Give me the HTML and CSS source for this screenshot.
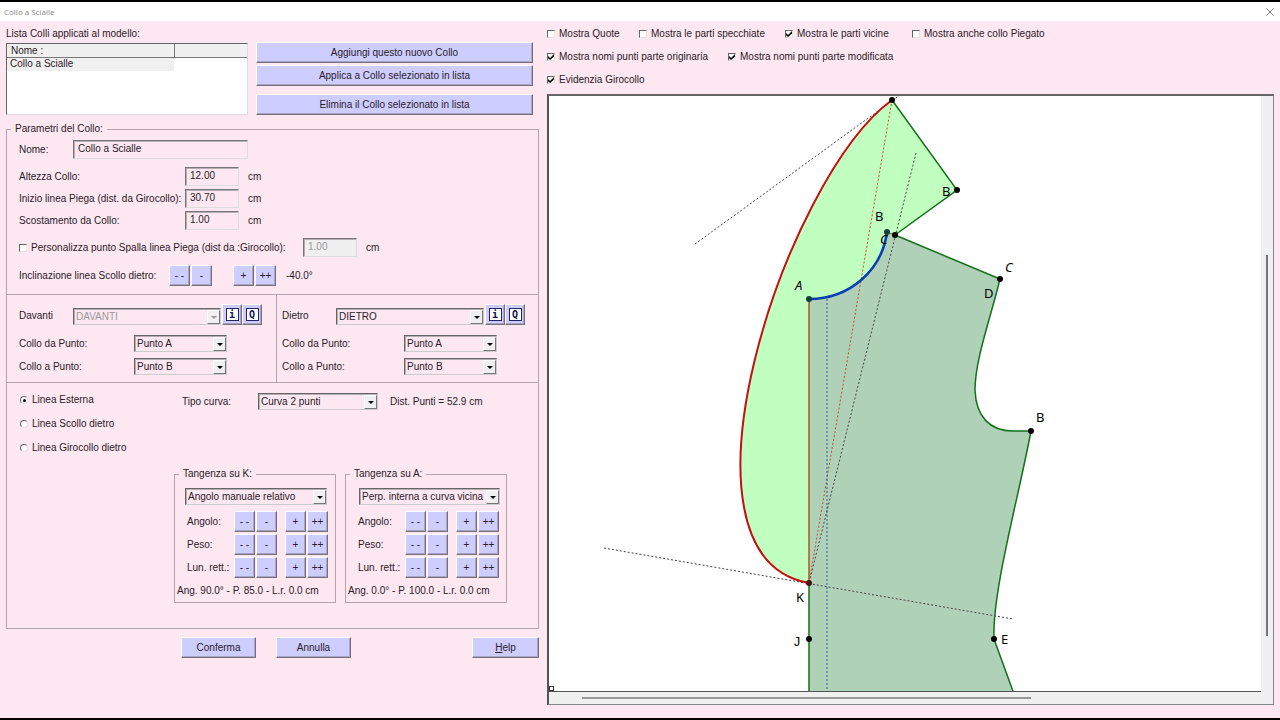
FILE: index.html
```html
<!DOCTYPE html>
<html lang="it">
<head>
    <meta charset="UTF-8">
    <meta name="viewport" content="width=device-width, initial-scale=1.0">
    <title>Collo a Scialle</title>
    <link rel="stylesheet" href="styles.css">
</head>
<body>

<header class="titlebar">
    <span>Collo a Scialle</span>
    <button class="close" aria-label="Chiudi">
        <svg width="8" height="8" viewBox="0 0 8 8"><path d="M0.5 0.5L7.5 7.5M7.5 0.5L0.5 7.5" stroke="#777" fill="none"/></svg>
    </button>
</header>

<main>
    <div class="left">
        <div class="top">
            <div class="lista">
                <div class="caption">Lista Colli applicati al modello:</div>
                <div class="listbox">
                    <table>
                        <thead><tr><th>Nome :</th><th></th></tr></thead>
                        <tbody><tr><td class="selected">Collo a Scialle</td><td></td></tr></tbody>
                    </table>
                </div>
            </div>
            <div class="actions">
                <button>Aggiungi questo nuovo Collo</button>
                <button>Applica a Collo selezionato in lista</button>
                <button class="delete">Elimina il Collo selezionato in lista</button>
            </div>
        </div>

        <fieldset class="parametri">
            <legend>Parametri del Collo:</legend>

            <div class="dati">
                <div class="row">
                    <label class="w-name" for="nome">Nome:</label>
                    <input type="text" class="long" id="nome" value="Collo a Scialle">
                </div>
                <div class="row space">
                    <label class="w-size" for="altezza">Altezza Collo:</label>
                    <input type="text" id="altezza" value="12.00"><span class="unit">cm</span>
                </div>
                <div class="row">
                    <label class="w-size" for="inizio">Inizio linea Piega (dist. da Girocollo):</label>
                    <input type="text" id="inizio" value="30.70"><span class="unit">cm</span>
                </div>
                <div class="row">
                    <label class="w-size" for="scostamento">Scostamento da Collo:</label>
                    <input type="text" id="scostamento" value="1.00"><span class="unit">cm</span>
                </div>
                <div class="row space">
                    <label class="check w-spalla"><input type="checkbox">Personalizza punto Spalla linea Piega (dist da :Girocollo):</label>
                    <input type="text" value="1.00" aria-label="Distanza da Girocollo" disabled><span class="unit">cm</span>
                </div>
                <div class="row steps space">
                    <span class="w-incl">Inclinazione linea Scollo dietro:</span>
                    <button class="step">- -</button><button class="step">-</button>
                    <button class="step plus wide">+</button><button class="step">++</button>
                    <span class="unit">-40.0°</span>
                </div>
            </div>

            <div class="parti">
                <div class="parte">
                    <div class="row pezzo">
                        <label for="davanti">Davanti</label>
                        <span class="combo off"><select id="davanti" disabled><option>DAVANTI</option></select></span>
                        <button class="icon"><b>i</b></button><button class="icon"><b>Q</b></button>
                    </div>
                    <div class="row punto">
                        <label for="da1">Collo da Punto:</label>
                        <span class="combo"><select id="da1"><option>Punto A</option></select></span>
                    </div>
                    <div class="row punto">
                        <label for="a1">Collo a Punto:</label>
                        <span class="combo"><select id="a1"><option>Punto B</option></select></span>
                    </div>
                </div>
                <div class="parte dietro">
                    <div class="row pezzo">
                        <label for="dietro">Dietro</label>
                        <span class="combo"><select id="dietro"><option>DIETRO</option></select></span>
                        <button class="icon"><b>i</b></button><button class="icon"><b>Q</b></button>
                    </div>
                    <div class="row punto">
                        <label for="da2">Collo da Punto:</label>
                        <span class="combo"><select id="da2"><option>Punto A</option></select></span>
                    </div>
                    <div class="row punto">
                        <label for="a2">Collo a Punto:</label>
                        <span class="combo"><select id="a2"><option>Punto B</option></select></span>
                    </div>
                </div>
            </div>

            <div class="linee">
                <div class="radios">
                    <label class="check"><input type="radio" name="linea" checked>Linea Esterna</label>
                    <label class="check"><input type="radio" name="linea">Linea Scollo dietro</label>
                    <label class="check"><input type="radio" name="linea">Linea Girocollo dietro</label>
                </div>
                <div class="curva">
                    <div class="row tipo">
                        <label for="tipo">Tipo curva:</label>
                        <span class="combo"><select id="tipo"><option>Curva 2 punti</option></select></span>
                        <span>Dist. Punti = 52.9 cm</span>
                    </div>
                    <div class="tangenze">
                        <fieldset>
                            <legend>Tangenza su K:</legend>
                            <span class="combo"><select aria-label="Tangenza su K"><option>Angolo manuale relativo</option></select></span>
                            <div class="row steps"><span>Angolo:</span><button class="step">- -</button><button class="step">-</button><button class="step plus">+</button><button class="step">++</button></div>
                            <div class="row steps"><span>Peso:</span><button class="step">- -</button><button class="step">-</button><button class="step plus">+</button><button class="step">++</button></div>
                            <div class="row steps"><span>Lun. rett.:</span><button class="step">- -</button><button class="step">-</button><button class="step plus">+</button><button class="step">++</button></div>
                            <p>Ang. 90.0° - P. 85.0 - L.r. 0.0 cm</p>
                        </fieldset>
                        <fieldset class="su-a">
                            <legend>Tangenza su A:</legend>
                            <span class="combo"><select aria-label="Tangenza su A"><option>Perp. interna a curva vicina</option></select></span>
                            <div class="row steps"><span>Angolo:</span><button class="step">- -</button><button class="step">-</button><button class="step plus">+</button><button class="step">++</button></div>
                            <div class="row steps"><span>Peso:</span><button class="step">- -</button><button class="step">-</button><button class="step plus">+</button><button class="step">++</button></div>
                            <div class="row steps"><span>Lun. rett.:</span><button class="step">- -</button><button class="step">-</button><button class="step plus">+</button><button class="step">++</button></div>
                            <p>Ang. 0.0° - P. 100.0 - L.r. 0.0 cm</p>
                        </fieldset>
                    </div>
                </div>
            </div>
        </fieldset>

        <div class="bottom">
            <button>Conferma</button>
            <button>Annulla</button>
            <button class="help"><u>H</u>elp</button>
        </div>
    </div>

    <div class="right">
        <div class="options">
            <div class="optrow four">
                <label class="check"><input type="checkbox">Mostra Quote</label>
                <label class="check"><input type="checkbox">Mostra le parti specchiate</label>
                <label class="check"><input type="checkbox" checked>Mostra le parti vicine</label>
                <label class="check"><input type="checkbox">Mostra anche collo Piegato</label>
            </div>
            <div class="optrow two">
                <label class="check"><input type="checkbox" checked>Mostra nomi punti parte originaria</label>
                <label class="check"><input type="checkbox" checked>Mostra nomi punti parte modificata</label>
            </div>
            <div class="optrow">
                <label class="check"><input type="checkbox" checked>Evidenzia Girocollo</label>
            </div>
        </div>

        <div class="viewer">
            <div class="canvas">
                <svg viewBox="549 96 712 595" preserveAspectRatio="xMinYMin meet">
                    <!-- corpo -->
                    <path class="corpo" d="M809 299C850 299 882 270 887 232L895 235L1000 279C990 320 975 360 975 390C976 417 990 431 1013 431L1031 431C1018 500 992 592 994 639L1014 694L809 694Z"/>
                    <!-- collo -->
                    <path class="collo" d="M892 100L957 190L895 235L887 232C882 270 850 299 809 299L809 583C660 557 785 178 892 100Z"/>
                    <path class="verde" d="M892 100L957 190L895 235L1000 279C990 320 975 360 975 390C976 417 990 431 1013 431L1031 431C1018 500 992 592 994 639L1014 694M809 583V694"/>
                    <path class="centro" d="M809 299V583"/>
                    <path class="piega" d="M887 232L895 235"/>
                    <path class="tratto" d="M695 244L900 95M916 153L809 583M604 548L1013 619"/>
                    <path class="tratto rosso" d="M892 100L809 583"/>
                    <path class="tratto blu" d="M827 299V691"/>
                    <path class="esterna" d="M892 100C785 178 660 557 809 583"/>
                    <path class="girocollo" d="M809 299C850 299 882 270 887 232"/>
                    <g class="punti">
                        <circle cx="892" cy="100" r="3"/>
                        <circle cx="957" cy="190" r="3"/>
                        <circle cx="895" cy="235" r="3"/>
                        <circle class="scuro" cx="887" cy="232" r="3"/>
                        <circle cx="1000" cy="279" r="3"/>
                        <circle class="scuro" cx="809" cy="299" r="3"/>
                        <circle cx="1031" cy="431" r="3"/>
                        <circle class="bordo" cx="809" cy="583" r="3"/>
                        <circle cx="809" cy="639" r="3"/>
                        <circle cx="994" cy="639" r="3"/>
                    </g>
                    <g class="nomi">
                        <text class="corsivo" x="795" y="290">A</text>
                        <text x="875" y="221">B</text>
                        <text x="942" y="196">B</text>
                        <text class="corsivo" x="880" y="244">C</text>
                        <text class="corsivo" x="1005" y="272">C</text>
                        <text x="984" y="298">D</text>
                        <text x="1036" y="422">B</text>
                        <text x="796" y="602">K</text>
                        <text class="mono" x="793" y="646">J</text>
                        <text x="1001" y="644">E</text>
                    </g>
                </svg>
                <i class="handle"></i>
            </div>
            <div class="vbar"><i></i></div>
            <div class="hbar"><i></i></div>
        </div>
    </div>
</main>

</body>
</html>
```
FILE: styles.css
```css
* {
    box-sizing: border-box;
}

body {
    margin: 0;
    min-height: 100vh;
    display: flex;
    flex-direction: column;
    border-top: 2px solid #000;
    border-bottom: 2px solid #000;
    background-color: #fde8f1;
    color: #2b2028;
    font-family: "Liberation Sans", Arial, sans-serif;
    font-size: 10px;
    line-height: 12px;
}

button, input, select {
    font: inherit;
    color: inherit;
    margin: 0;
}

.titlebar {
    display: flex;
    justify-content: space-between;
    align-items: center;
    height: 19px;
    padding: 0 6px 0 4px;
    background-color: #fff;
    color: #888;
    font-family: "Open Sans", sans-serif;
    font-size: 8px;
}

.titlebar .close {
    display: flex;
    padding: 0;
    border: none;
    background: none;
    box-shadow: none;
}

main {
    flex: 1;
    display: grid;
    grid-template-columns: 533px 1fr;
    column-gap: 8px;
    padding: 7px 6px 13px;
}

.left, .right {
    display: flex;
    flex-direction: column;
}

/* pulsanti */
button {
    padding: 0;
    text-align: center;
    background-color: #cdcdff;
    border: 1px solid;
    border-color: #fff #75707c #75707c #fff;
    box-shadow: inset -1px -1px #aaa5c4;
}

/* lista */
.top {
    display: flex;
    gap: 8px;
}

.lista {
    width: 242px;
}

.caption {
    padding-bottom: 3px;
}

.listbox {
    height: 72px;
    background-color: #fff;
    border: 1px solid;
    border-color: #666 #ddd #ddd #666;
}

table {
    width: 100%;
    border-collapse: collapse;
    table-layout: fixed;
}

th, td {
    height: 13px;
    padding: 0 3px;
    text-align: left;
    font-weight: normal;
}

th {
    padding: 1px 4px 0;
    background-color: #f0f0f0;
    border-bottom: 1px solid #777;
}

th:first-child {
    width: 167px;
    border-right: 1px solid #777;
}

.selected {
    background-color: #f0f0f0;
}

.actions {
    flex: 1;
    display: flex;
    flex-direction: column;
    gap: 2px;
    padding: 14px 6px 0 0;
}

.actions button {
    height: 21px;
}

.actions .delete {
    margin-top: 6px;
}

/* parametri */
fieldset {
    min-width: 0;
    margin: 0;
    padding: 0;
    border: 1px solid #b5a5b0;
}

legend {
    margin-left: 4px;
    padding: 0 4px;
}

.parametri {
    margin-top: 8px;
}

.row {
    display: flex;
    align-items: center;
}

.dati {
    display: flex;
    flex-direction: column;
    gap: 3px;
    padding: 5px 12px 8px;
}

.space {
    margin-top: 5px;
}

.w-name {
    width: 54px;
}

.w-size {
    width: 166px;
}

.w-spalla {
    width: 284px;
}

.w-incl {
    width: 149px;
}

input[type="text"] {
    width: 54px;
    height: 19px;
    padding: 0 4px 3px;
    background-color: transparent;
    border: 1px solid;
    border-color: #777 #ddd #ddd #777;
    box-shadow: inset 1px 1px #b9adb4;
}

input[type="text"].long {
    width: 175px;
}

input[type="text"]:disabled {
    background-color: #f0f0f0;
    color: #999;
}

.unit {
    margin-left: 9px;
}

.steps {
    gap: 1px;
}

.step {
    width: 21px;
    height: 21px;
}

.plus {
    margin-left: 7px;
}

.plus.wide {
    margin-left: 20px;
}

/* spunte */
.check {
    display: flex;
    align-items: center;
    gap: 4px;
    white-space: nowrap;
}

.check input {
    appearance: none;
    position: relative;
    width: 8px;
    height: 8px;
    background-color: #fff;
    border: 1px solid;
    border-color: #666 #e8e0e4 #e8e0e4 #666;
}

.check input[type="checkbox"]:checked::before {
    content: "";
    position: absolute;
    inset: 0;
    background-color: #000;
    clip-path: polygon(0 35%, 35% 65%, 100% 0, 100% 40%, 35% 100%, 0 70%);
}

.check input[type="radio"] {
    border-radius: 50%;
}

.check input[type="radio"]:checked::before {
    content: "";
    position: absolute;
    left: 2px;
    top: 2px;
    width: 3px;
    height: 3px;
    border-radius: 50%;
    background-color: #000;
}

/* menu a tendina */
.combo {
    position: relative;
    display: block;
}

.combo select {
    appearance: none;
    display: block;
    width: 100%;
    height: 17px;
    padding: 0 14px 0 2px;
    border: 1px solid;
    border-color: #666 #ccc #ccc #666;
    border-radius: 0;
    background-color: transparent;
    box-shadow: inset 1px 1px #b9adb4;
    opacity: 1;
}

.combo::before {
    content: "";
    position: absolute;
    right: 1px;
    top: 2px;
    bottom: 1px;
    width: 11px;
    background-color: #f0f0f0;
    border: 1px solid;
    border-color: #fff #777 #777 #fff;
    pointer-events: none;
}

.combo::after {
    content: "";
    position: absolute;
    right: 4px;
    top: 8px;
    border: solid transparent;
    border-width: 3px 3px 0;
    border-top-color: #000;
    pointer-events: none;
}

.combo.off {
    color: #999;
}

.combo.off::after {
    border-top-color: #999;
}

.parti {
    display: grid;
    grid-template-columns: 270px 1fr;
    border: solid #b5a5b0;
    border-width: 1px 0;
}

.parte {
    display: flex;
    flex-direction: column;
    gap: 6px;
    padding: 9px 0 7px 12px;
    border-right: 1px solid #b5a5b0;
}

.parte.dietro {
    padding-left: 5px;
    border-right: none;
}

.pezzo {
    margin-bottom: 4px;
}

.pezzo label {
    width: 54px;
    padding-top: 3px;
}

.pezzo .combo {
    width: 148px;
    margin: 4px 1px 0 0;
}

.icon {
    display: flex;
    justify-content: center;
    align-items: center;
    width: 20px;
    height: 21px;
}

.icon b {
    width: 13px;
    height: 13px;
    border: 1px solid #23236a;
    background-color: #fff;
    color: #141450;
    font-family: "DejaVu Sans Mono", monospace;
    line-height: 11px;
}

.punto label {
    width: 115px;
}

.dietro .punto label {
    width: 122px;
}

.punto .combo {
    width: 93px;
}

/* linee e tangenze */
.linee {
    display: grid;
    grid-template-columns: 167px 1fr;
}

.radios {
    padding: 5px 0 0 13px;
}

.radios .check {
    height: 24px;
}

.tipo {
    padding: 10px 0 0 8px;
}

.tipo label {
    width: 76px;
}

.tipo .combo {
    width: 120px;
    margin-right: 12px;
}

.tangenze {
    display: flex;
    gap: 9px;
    padding: 58px 0 25px;
}

.tangenze fieldset {
    width: 162px;
}

.tangenze .combo {
    margin: 8px 8px 6px 10px;
}

.tangenze .su-a .combo {
    margin-left: 13px;
    margin-right: 6px;
}

.tangenze .row {
    margin: 0 0 2px 12px;
}

.tangenze .row span {
    width: 46px;
    white-space: nowrap;
}

.tangenze p {
    margin: 7px 0 5px 2px;
    white-space: nowrap;
}

.bottom {
    display: flex;
    gap: 20px;
    padding: 8px 0 0 175px;
}

.bottom button {
    width: 75px;
    height: 21px;
}

.bottom .help {
    width: 67px;
    margin-left: auto;
}

/* opzioni e disegno */
.optrow {
    display: grid;
    height: 23px;
    align-items: start;
}

.optrow.four {
    grid-template-columns: 92px 146px 127px 1fr;
}

.optrow.two {
    grid-template-columns: 181px 1fr;
}

.optrow:last-child {
    height: 20px;
}

.viewer {
    flex: 1;
    display: grid;
    grid-template-columns: 1fr 12px;
    grid-template-rows: 1fr 12px;
    background-color: #f0f0f0;
    border: solid;
    border-width: 2px 1px 1px 2px;
    border-color: #666 #888 #888 #555;
}

.canvas {
    position: relative;
    overflow: hidden;
    background-color: #fff;
    border-bottom: 1px solid #555;
}

.canvas svg {
    display: block;
    width: 100%;
}

.handle {
    position: absolute;
    left: 0;
    bottom: 0;
    width: 5px;
    height: 5px;
    border: 1px solid #333;
    background-color: #fff;
}

.vbar, .hbar {
    display: flex;
}

.vbar i {
    width: 2px;
    height: 64%;
    margin: auto auto 56px 5px;
    background-color: #777;
}

.hbar i {
    width: 63%;
    height: 2px;
    margin: 5px 0 0 33px;
    background-color: #999;
}

.canvas path {
    fill: none;
}

.canvas .corpo {
    fill: #aed1b8;
}

.canvas .collo {
    fill: #c1ffc0;
}

.verde {
    stroke: #14701a;
    stroke-width: 1.5;
}

.centro {
    stroke: #a85a20;
    stroke-width: 1.5;
}

.piega {
    stroke: #a85a20;
}

.tratto {
    stroke: #444;
    stroke-dasharray: 2 2;
}

.tratto.rosso {
    stroke: #c0502a;
}

.tratto.blu {
    stroke: #2a5a9a;
}

.esterna {
    stroke: #c41010;
    stroke-width: 2;
}

.girocollo {
    stroke: #0a3cb4;
    stroke-width: 2.5;
}

.punti .scuro {
    fill: #14403c;
}

.punti .bordo {
    fill: #4a1414;
}

.nomi {
    font-family: "Noto Sans", sans-serif;
    font-size: 13px;
}

.corsivo {
    font-style: italic;
}

.mono {
    font-family: "Liberation Mono", monospace;
}
```
